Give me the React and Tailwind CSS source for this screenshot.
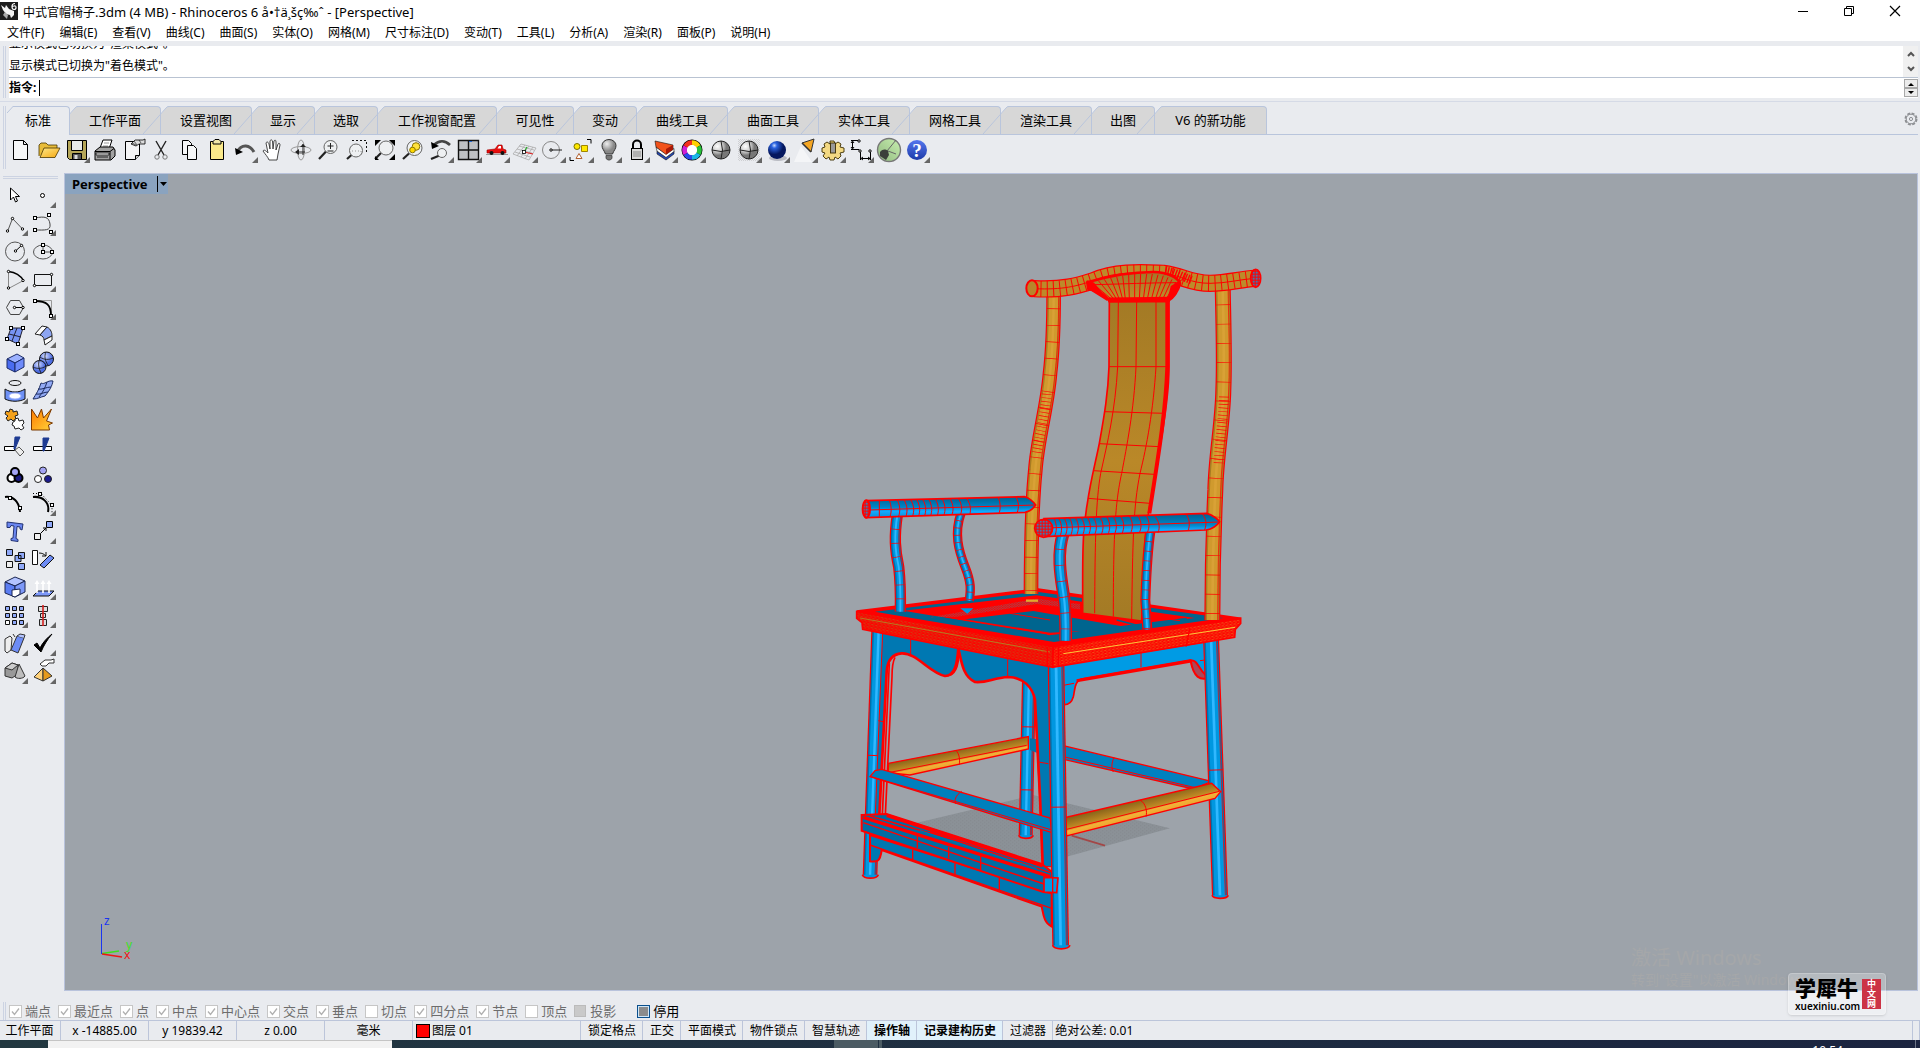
import { useState } from "react";

const menus = [
  "文件(F)", "编辑(E)", "查看(V)", "曲线(C)", "曲面(S)", "实体(O)", "网格(M)",
  "尺寸标注(D)", "变动(T)", "工具(L)", "分析(A)", "渲染(R)", "面板(P)", "说明(H)",
];

const tabs = [
  { label: "标准", width: "w-[63px]" },
  { label: "工作平面", width: "w-[91px]" },
  { label: "设置视图", width: "w-[91px]" },
  { label: "显示", width: "w-[63px]" },
  { label: "选取", width: "w-[63px]" },
  { label: "工作视窗配置", width: "w-[119px]" },
  { label: "可见性", width: "w-[77px]" },
  { label: "变动", width: "w-[63px]" },
  { label: "曲线工具", width: "w-[91px]" },
  { label: "曲面工具", width: "w-[91px]" },
  { label: "实体工具", width: "w-[91px]" },
  { label: "网格工具", width: "w-[91px]" },
  { label: "渲染工具", width: "w-[91px]" },
  { label: "出图", width: "w-[63px]" },
  { label: "V6 的新功能", width: "w-[112px]" },
];

const osnaps = [
  ["端点", true], ["最近点", true], ["点", true], ["中点", true], ["中心点", true],
  ["交点", true], ["垂点", true], ["切点", false], ["四分点", true], ["节点", true],
  ["顶点", false],
];

const toggles = [
  ["锁定格点", false], ["正交", false], ["平面模式", false], ["物件锁点", false],
  ["智慧轨迹", false], ["操作轴", true], ["记录建构历史", true], ["过滤器", false],
];

// small square control point
function Sq({ x, y }) {
  return <rect x={x - 1.5} y={y - 1.5} width="3" height="3" fill="#fff" stroke="#000" />;
}

// small round control point
function Dot({ x, y }) {
  return <circle cx={x} cy={y} r="1.2" fill="#fff" stroke="#000" />;
}

function Lens({ x, y, r = 6.5 }) {
  return (
    <g fill="none">
      <path d={`M${x - r + 2} ${y + r - 2}L4 23`} stroke="#222" strokeWidth="2.2" />
      <circle cx={x} cy={y} r={r} fill="#eef0f2" stroke="#666" />
    </g>
  );
}

const standardTools = [
  { name: "新建", el: <path d="M6.5 4.5h10l4 4v15h-14z M16.5 4.5v4h4" fill="#f6f7f8" stroke="#000" /> },
  {
    name: "打开",
    el: (
      <g stroke="#4a3600" strokeWidth="0.8">
        <path d="M4 20V9l2-2h5l2 2h9v3" fill="#e8bc3a" />
        <path d="M5 21.500L9 12h16l-5 9.500z" fill="url(#gold)" />
      </g>
    ),
  },
  {
    name: "保存", more: true,
    el: (
      <g stroke="#000">
        <path d="M4.500 4.500h19v19h-17l-2-2z" fill="#b5a658" />
        <path d="M8.500 4.500h11v10h-11z" fill="#e9ebe8" />
        <path d="M9.500 17.500h9v6h-9z" fill="#555" />
        <path d="M11.500 19h3v4h-3z" fill="#ddd" stroke="none" />
      </g>
    ),
  },
  {
    name: "打印",
    el: (
      <g stroke="#000">
        <path d="M9 12l3-8h9l-3 9" fill="#fff" />
        <path d="M13 7h5M12 10h5" stroke="#999" />
        <path d="M4 15l5-4h13l2 3v6l-4 4H4z" fill="#a2a2a2" />
        <path d="M4 15.500h15v8M19 15.500l4-3" fill="none" />
        <path d="M5 17h13v2H5zM6 21h11" fill="#fff" strokeWidth="0.8" />
      </g>
    ),
  },
  {
    name: "文件属性",
    el: (
      <g stroke="#000">
        <path d="M6.500 5.500h14v14l-4 4h-10z" fill="#f4f4f5" />
        <path d="M20.500 19.500h-4v4" fill="#ccc" />
        <path d="M12 8l4-4h8l2-1v5h-6l-3 2z" fill="#ddd" strokeWidth="0.8" />
        <path d="M13 7l4 2M15 5l3 4M20 4l2 3" strokeWidth="0.6" />
      </g>
    ),
  },
  {
    name: "剪切",
    el: (
      <g fill="none" stroke="#222">
        <path d="M9 5l8 14M19 5l-8 14" strokeWidth="1.4" />
        <circle cx="10" cy="21" r="2.200" stroke="#777" />
        <circle cx="18" cy="21" r="2.200" stroke="#777" />
      </g>
    ),
  },
  {
    name: "复制",
    el: (
      <g fill="#f6f7f8" stroke="#000">
        <path d="M7.500 4.500h6l3 3v11h-9z" />
        <path d="M12.500 9.500h6l3 3v11h-9z" />
      </g>
    ),
  },
  {
    name: "粘贴",
    el: (
      <g stroke="#000">
        <path d="M7.500 5.500h13v18h-13z" fill="#fae98a" />
        <path d="M10 5.500l2-2h4l2 2v2.500h-8z" fill="#f0e7a8" />
      </g>
    ),
  },
  {
    name: "撤销", more: true,
    el: (
      <g>
        <path d="M6 16C11 7 19 9 23 16" fill="none" stroke="#555" strokeWidth="3" />
        <path d="M4 12l1 7 7-3z" fill="#000" />
      </g>
    ),
  },
  {
    name: "平移",
    el: (
      <path
        d="M10 24c-1-3-4-6-6-9 1-2 3 0 5 2L7 7c1-2 2-1 3 1l1 5V5c1-2 2-1 2.500 0l.5 8 1-8c1-1.500 2-1 2 1v8l2-6c1-1.500 2-.5 2 1l-2 9-1 6z"
        fill="#fff" stroke="#333" strokeWidth="0.9"
      />
    ),
  },
  {
    name: "旋转视图",
    el: (
      <g fill="none" stroke="#999">
        <ellipse cx="14" cy="14" rx="10" ry="3.500" />
        <ellipse cx="14" cy="14" rx="3.500" ry="10" />
        <path d="M16 8v11M10 16h8" stroke="#222" />
        <path d="M13 11l3-3 3 3zM12 13l-4 3 4 3z" fill="#222" stroke="none" />
      </g>
    ),
  },
  {
    name: "缩放",
    el: (
      <g>
        <Lens x={15.500} y={11} />
        <path d="M12.500 10h6M15.500 7v6M12.500 15h6" stroke="#222" />
      </g>
    ),
  },
  {
    name: "框选缩放",
    el: (
      <g>
        <Lens x={13} y={14.500} />
        <path d="M9 4.500h14.500V18" fill="none" stroke="#111" strokeDasharray="2 2" />
        <path d="M9 15h9v4" fill="none" stroke="#999" strokeDasharray="1 2" />
      </g>
    ),
  },
  {
    name: "缩放至范围",
    el: (
      <g>
        <Lens x={15} y={12} r={7} />
        <path d="M4 4h6L4 10zM24 4v6l-6-6zM4 24v-4l4 4zM24 24h-6l6-6z" fill="#000" />
      </g>
    ),
  },
  {
    name: "缩放至选取",
    el: (
      <g>
        <Lens x={15.500} y={12} r={7.500} />
        <circle cx="17" cy="10.500" r="3.800" fill="#ffe23c" stroke="#8a7400" />
        <circle cx="13.500" cy="14" r="2.800" fill="#ffd900" stroke="#8a7400" />
      </g>
    ),
  },
  {
    name: "上一视图", more: true,
    el: (
      <g>
        <Lens x={15} y={17} r={4.500} />
        <path d="M7 9C12 4 18 4 23 9" fill="none" stroke="#444" strokeWidth="2.6" />
        <path d="M4 6l1 7 7-3z" fill="#000" />
      </g>
    ),
  },
  {
    name: "四视图", more: true,
    el: (
      <g>
        <path d="M3.500 4.500h20v19h-20z" fill="#bfc1c4" stroke="#111" strokeWidth="1.400" />
        <path d="M13.500 4.500v19M3.500 14h20" stroke="#111" strokeWidth="1.400" />
        <path d="M14 5.500h3" stroke="#26c" />
      </g>
    ),
  },
  {
    name: "汽车", more: true,
    el: (
      <g>
        <path d="M3 18.500h22" stroke="#999" />
        <path d="M4 17v-3l8-1 3-4h4l1 4 3 1v3z" fill="#e80d0d" stroke="#900" strokeWidth="0.6" />
        <path d="M14.500 12.500l1.500-2.500h2v2.500z" fill="#fff" />
        <circle cx="8.500" cy="17" r="2" fill="#111" />
        <circle cx="19.500" cy="17" r="2" fill="#111" />
      </g>
    ),
  },
  {
    name: "工作平面", more: true,
    el: (
      <g fill="none" stroke="#aaa" strokeWidth="0.800">
        <path d="M10 8l15 4-7 12L2 18zM6 13l15 4M4 16l15 5M8 10l15 4M14 9l-8 11M18 10l-8 11M22 11l-8 12" />
        <path d="M13 16l9 2" stroke="#d22" strokeWidth="1.200" />
        <path d="M13 16l3-5" stroke="#2a2" strokeWidth="1.200" />
        <Sq x={13} y={16} />
      </g>
    ),
  },
  {
    name: "设置中心", more: true,
    el: (
      <g fill="none" stroke="#888">
        <circle cx="12" cy="14" r="8.500" />
        <path d="M12 14h11" stroke="#222" />
        <Dot x={12} y={14} />
      </g>
    ),
  },
  {
    name: "选取", more: true,
    el: (
      <g stroke="#000">
        <circle cx="10" cy="10.500" r="3" fill="#ffe800" stroke="#777000" />
        <path d="M14.500 9.500h6v6h-6z" fill="#ffe800" stroke="#a08400" />
        <path d="M9 22.500l3-5 3 5z" fill="#fff" stroke="#b06030" />
        <path d="M20 3.500h4v4M3 21v3.500h4" fill="none" />
      </g>
    ),
  },
  {
    name: "隐藏", more: true,
    el: (
      <g>
        <path d="M10.500 18C9 14 7 13 7 9.500a7 6 0 0114 0c0 3.500-2 4.500-3.500 8.500z" fill="url(#bulb)" stroke="#333" />
        <path d="M11 19.500h6v3l-2 1.500h-2l-2-1.500z" fill="#777" stroke="#333" strokeWidth="0.7" />
      </g>
    ),
  },
  {
    name: "锁定", more: true,
    el: (
      <g>
        <path d="M10 13V8.500a4 4 0 018 0V13" fill="none" stroke="#000" strokeWidth="2" />
        <rect x="8.500" y="12.500" width="11" height="11" fill="#d8d8d8" stroke="#000" />
        <path d="M10 16h8M10 18h8M10 20h8" stroke="#888" />
      </g>
    ),
  },
  {
    name: "图层", more: true,
    el: (
      <g strokeLinejoin="round">
        <path d="M6 15l9 6 8-6v3l-8 6-9-6z" fill="#2347b4" stroke="#111" strokeWidth="0.600" />
        <path d="M5 11l10 6.500 8-5v3l-8 6L6 15z" fill="#fff" stroke="#111" strokeWidth="0.600" />
        <path d="M4 5l18 4v4.500l-7 5L5 11z" fill="#f2521b" stroke="#111" strokeWidth="0.600" />
        <path d="M15 13l7-4v4.500l-7 5z" fill="#a81808" />
      </g>
    ),
  },
  {
    name: "属性", more: true,
    el: (
      <g fill="none" strokeWidth="4.500">
        <circle cx="13" cy="14" r="7.500" stroke="#000" strokeWidth="6" />
        <circle cx="13" cy="14" r="5.500" fill="#fff" stroke="none" />
        <path d="M13 6.500a7.500 7.500 0 016.500 3.750" stroke="#ffd000" />
        <path d="M19.500 10.250a7.500 7.500 0 010 7.500" stroke="#28c23a" />
        <path d="M19.500 17.750a7.500 7.500 0 01-6.500 3.750" stroke="#19b7e6" />
        <path d="M13 21.500a7.500 7.500 0 01-6.500-3.750" stroke="#2a48ea" />
        <path d="M6.500 17.750a7.500 7.500 0 010-7.500" stroke="#d21fd6" />
        <path d="M6.500 10.250a7.500 7.500 0 016.500-3.750" stroke="#f4301c" />
      </g>
    ),
  },
  {
    name: "着色",
    el: (
      <g>
        <circle cx="14" cy="14" r="9" fill="url(#grayBall)" stroke="#222" />
        <path d="M14 5q3 9 0 18M5 14q9 3 18 0" stroke="#222" fill="none" />
      </g>
    ),
  },
  {
    name: "着色模式", more: true, pressed: true,
    el: (
      <g>
        <circle cx="14" cy="14" r="9" fill="url(#grayBall)" stroke="#222" />
        <path d="M14 5q3 9 0 18M5 14q9 3 18 0" stroke="#222" fill="none" />
      </g>
    ),
  },
  {
    name: "渲染", more: true,
    el: (
      <g>
        <ellipse cx="15" cy="22" rx="9" ry="3" fill="#b9bbc2" />
        <circle cx="14" cy="14" r="9" fill="url(#blueBall)" />
      </g>
    ),
  },
  {
    name: "灯光", more: true,
    el: (
      <g>
        <path d="M10 10L3 26h18z" fill="#fff" opacity="0.500" />
        <path d="M11 7l12-4-3 13z" fill="#f5a623" stroke="#333" />
        <path d="M11 7l9 9" stroke="#333" strokeWidth="1.600" />
      </g>
    ),
  },
  {
    name: "选项", more: true,
    el: (
      <g stroke="#3a2c00" strokeWidth="0.900">
        <path
          d="M11 5h4l1 3 3-2 3 2-1 3 4 1v4l-4 1 1 3-3 3-3-2-1 3h-4l-1-3-3 2-3-3 2-3-3-1v-4l3-1-1-3 3-2 3 2z"
          fill="#f3d983"
        />
        <rect x="11.500" y="7" width="5" height="10" fill="#999" />
      </g>
    ),
  },
  {
    name: "尺寸标注", more: true,
    el: (
      <g fill="none" stroke="#000">
        <path d="M4 4.500h7M4 13.500h8M5.500 6v6M13.500 16v8M23.500 16v8M15 22.500h8" />
        <path d="M4 7l1.500-2L7 7M4 11l1.500 2L7 11M16 21l-2 1.500 2 1.500M21 21l2 1.500-2 1.500" />
        <Dot x={12} y={5} />
        <Dot x={13} y={15} />
        <Dot x={23} y={15} />
      </g>
    ),
  },
  {
    name: "Grasshopper",
    el: (
      <g>
        <circle cx="14" cy="14" r="11.500" fill="url(#green)" stroke="#777" strokeWidth="1.400" />
        <path d="M12 15l9-11M13 15l8 3" stroke="#666" fill="none" />
        <path d="M5 16c3-3 5-3 8-1l1 4-3 5-6-4z" fill="#3b3f3a" />
      </g>
    ),
  },
  {
    name: "帮助", more: true,
    el: (
      <g>
        <circle cx="14" cy="14" r="10" fill="url(#helpBlue)" />
        <text x="14" y="21" textAnchor="middle" fontSize="19" fontWeight="700" fill="#fff" fontFamily="Liberation Serif, serif">?</text>
      </g>
    ),
  },
];

const sideTools = [
  { name: "选取", el: <path d="M9.500 7v12l3-3 2 5 2-1-2-4.500h4z" fill="#fff" stroke="#000" /> },
  { name: "点", more: true, el: <circle cx="13.500" cy="14.500" r="2" fill="#fff" stroke="#000" /> },
  {
    name: "多重直线", more: true,
    el: (
      <g fill="none" stroke="#555">
        <path d="M6.500 22.500l5-13 10 10.500" />
        <Dot x={6.500} y={22} /><Dot x={11.500} y={9.500} /><Dot x={21.500} y={20} />
      </g>
    ),
  },
  {
    name: "控制点曲线", more: true,
    el: (
      <g fill="none" stroke="#444">
        <path d="M6 9c10-2 14-1 15 6s-5 6-15 6" />
        <Sq x={6} y={9} /><Sq x={20} y={6} /><Sq x={6} y={21} /><Sq x={22} y={23} />
      </g>
    ),
  },
  {
    name: "圆", more: true,
    el: (
      <g fill="none" stroke="#555">
        <circle cx="14" cy="14.500" r="9.500" />
        <path d="M14 14.500l6.500-6" stroke="#000" />
        <Dot x={14.500} y={14} /><Dot x={20.500} y={8.500} />
      </g>
    ),
  },
  {
    name: "椭圆", more: true,
    el: (
      <g fill="none" stroke="#555">
        <ellipse cx="14" cy="15" rx="9.500" ry="7" />
        <path d="M14 8v7h9" />
        <Sq x={14} y={8} /><Sq x={14} y={15} /><Sq x={23} y={15} />
      </g>
    ),
  },
  {
    name: "圆弧", more: true,
    el: (
      <g fill="none" stroke="#888">
        <path d="M7.500 6.500v17l15-8" />
        <path d="M7.500 6.500c8 1 12 4 15 9" stroke="#000" strokeWidth="1.400" />
        <Dot x={7.500} y={6.500} /><Dot x={7.500} y={23} /><Dot x={22} y={15.500} />
      </g>
    ),
  },
  {
    name: "矩形", more: true,
    el: (
      <g fill="none" stroke="#111">
        <path d="M5.500 9.500h17v11h-17z" />
        <Dot x={22.500} y={9.500} /><Dot x={5.500} y={20.500} />
      </g>
    ),
  },
  {
    name: "多边形", more: true,
    el: (
      <g fill="none" stroke="#444">
        <path d="M9.500 7.500h9l4 7-4 7h-9l-4-7z" />
        <path d="M13.500 14.500h9" stroke="#000" />
        <Dot x={13.500} y={14.500} /><Dot x={22} y={14.500} />
      </g>
    ),
  },
  {
    name: "曲线圆角", more: true,
    el: (
      <g fill="none">
        <path d="M6 7.500h16.500V23" stroke="#999" />
        <path d="M6 8c12 0 16 4 16 15" stroke="#000" strokeWidth="1.800" />
        <Sq x={6} y={8} /><Sq x={22} y={23} />
      </g>
    ),
  },
  {
    name: "曲面", more: true,
    el: (
      <g>
        <path d="M10 7h12l-5 16L6 18z" fill="#7794f4" stroke="#223" />
        <path d="M16 7l-5 13M8 13l12 3" stroke="#223" />
        <Sq x={10} y={7} /><Sq x={22} y={7} /><Sq x={6} y={18} /><Sq x={17} y={23} />
      </g>
    ),
  },
  {
    name: "曲面圆角", more: true,
    el: (
      <g stroke="#222">
        <path d="M6 13l7-8 5 1-7 8z" fill="#fff" />
        <path d="M11 14l7-8c4 2 5 6 5 9l-8 4c0-2-1-4-4-5z" fill="#8da5f2" />
        <path d="M15 19l8-4v4l-7 5z" fill="#fff" />
      </g>
    ),
  },
  {
    name: "立方体", more: true,
    el: (
      <g stroke="#1a2a66">
        <path d="M6 10l10-5 7 4-9 5z" fill="#9db2ff" />
        <path d="M6 10l8 4v9l-8-4z" fill="#4a6cf0" />
        <path d="M14 14l9-5v9l-9 5z" fill="#6f8bfa" />
      </g>
    ),
  },
  {
    name: "布尔并集", more: true,
    el: (
      <g stroke="#111">
        <circle cx="17.500" cy="10" r="7" fill="url(#peri)" />
        <circle cx="10.500" cy="18" r="6.500" fill="url(#peri)" />
        <path d="M11 8c4 3 9 3 13 1M17 3c-2 4-1 9 2 13M4 18c4 2 9 2 13-1M10 12c-1 4 0 8 2 12" fill="none" strokeWidth="0.800" />
      </g>
    ),
  },
  {
    name: "投影曲线", more: true,
    el: (
      <g stroke="#111">
        <ellipse cx="14" cy="6" rx="6" ry="2.500" fill="none" />
        <path d="M4 12c6 4 14 4 20 0v10c-6 3-14 3-20 0z" fill="#6d90f5" />
        <ellipse cx="14" cy="19" rx="6" ry="3" fill="#fff" stroke="#9db2ff" />
      </g>
    ),
  },
  {
    name: "网格曲面", more: true,
    el: (
      <g stroke="#1d2c60" fill="#92aaf5">
        <path d="M12 6c4 2 6-3 12-2-1 5-3 9-8 15-5 1-7 3-12 3 3-5 6-9 8-16z" />
        <path d="M18 5c-2 6-4 10-8 15M9 12c4 1 8-2 13-2M7 17c4 1 8-2 12-2" fill="none" />
      </g>
    ),
  },
  {
    name: "组合",
    el: (
      <g stroke="#222">
        <path d="M5 6l3 1 1-3 3 1v2l4-1 1 4-3 1 1 3-3 2-2-2-3 2-2-3 2-2-3-2z" fill="#f5a21c" />
        <path d="M14 14l3-1 1 3 4-1 1 3-2 2 2 3-3 2-2-2-4 1-1-3-2-1 1-3 2-1z" fill="#fff" />
      </g>
    ),
  },
  {
    name: "炸开",
    el: <path d="M2.500 4l6 9 4-9 2 9 8-9-5 12 6 2-4 2 1 5H2.500z" fill="url(#fire)" stroke="#7a3800" />,
  },
  {
    name: "修剪",
    el: (
      <g stroke="#000">
        <path d="M3.500 13.500h10v4h-10z" fill="#fff" />
        <path d="M14 17l4-3 5 5-4 4z" fill="#eee" stroke="#555" />
        <path d="M14 4h5l-5 12h-1z" fill="#1e3b92" stroke="#1e3b92" />
      </g>
    ),
  },
  {
    name: "分割",
    el: (
      <g stroke="#000">
        <path d="M4.500 13.500h18v4h-18z" fill="#fff" />
        <path d="M14 5h6l-5 13h-1z" fill="#1e3b92" stroke="#1e3b92" />
      </g>
    ),
  },
  {
    name: "群组", more: true,
    el: (
      <g stroke="#000" strokeWidth="2">
        <circle cx="10.500" cy="17" r="4" fill="#fff" />
        <circle cx="17.500" cy="17" r="4" fill="#1a1a80" />
        <circle cx="14" cy="11" r="4" fill="#a3a3f5" />
      </g>
    ),
  },
  {
    name: "解散群组",
    el: (
      <g stroke="#222">
        <circle cx="14" cy="9.500" r="3.500" fill="#a3a3f5" />
        <circle cx="9" cy="18" r="3.500" fill="#fff" />
        <circle cx="19" cy="18" r="3.500" fill="#1a1a90" />
      </g>
    ),
  },
  {
    name: "点编辑",
    el: (
      <g fill="none">
        <path d="M4 8c8-1 14 4 15 15" stroke="#000" strokeWidth="2" />
        <Sq x={9} y={9} /><Sq x={19} y={19} />
      </g>
    ),
  },
  {
    name: "控制点", more: true,
    el: (
      <g fill="none">
        <path d="M4 8c9-1 17 5 15 15" stroke="#000" strokeWidth="2" />
        <path d="M4 4.500h8l11 12v8" stroke="#000" strokeDasharray="1 2" />
        <Sq x={11} y={5} /><Sq x={23} y={16} />
      </g>
    ),
  },
  {
    name: "文字",
    el: <path d="M6 5l16 2-1 6-2-1v-2l-3-.500-1 12 2 1v2l-7-1v-2l2-.500 1-12-3-.500-1 2H6z" fill="#6a86f0" stroke="#223272" />,
  },
  {
    name: "移动", more: true,
    el: (
      <g stroke="#000">
        <path d="M17.500 4.500h6v6h-6z" fill="#8fa8f8" />
        <path d="M5.500 16.500h6v6h-6z" fill="#eee" />
        <path d="M12 16l5-5M14 11h3v3" fill="none" />
      </g>
    ),
  },
  {
    name: "复制物件",
    el: (
      <g stroke="#111" fill="#8fa8f8">
        <path d="M5.500 4.500h6v6h-6zM17.500 7.500h6v6h-6zM14 10.500h6v6h-6zM17.500 18.500h6v6h-6z" />
        <path d="M5.500 16.500h6v6h-6z" fill="#eee" />
      </g>
    ),
  },
  {
    name: "旋转",
    el: (
      <g stroke="#111">
        <path d="M3.500 5.500h5v14h-5z" fill="#fff" />
        <path d="M10 8c3 0 5 1 7 3M17 7v4h-4" fill="none" />
        <path d="M11 20l10-10 4 3-10 10z" fill="#6d8cf5" />
      </g>
    ),
  },
  {
    name: "实体工具", more: true,
    el: (
      <g stroke="#1a2550">
        <path d="M4 9l10-5 10 4-10 5z" fill="#b3c3ff" />
        <path d="M4 9l10 4v11L4 20z" fill="#5b7df2" />
        <path d="M14 13l10-5v11l-10 5z" fill="#7d98f8" />
        <path d="M11 17l8-1v5l-5 3-3-1z" fill="#fff" />
      </g>
    ),
  },
  {
    name: "挤出", more: true,
    el: (
      <g>
        <path d="M4 23l5-5h16l-5 5z" fill="#7d98f8" stroke="#111" />
        <path d="M8 20V9M14 20V9M20 20V9" stroke="#fff" strokeWidth="1.600" />
        <path d="M5.500 11L8 7l2.500 4zM11.500 11L14 7l2.500 4zM17.500 11L20 7l2.500 4z" fill="#fff" />
      </g>
    ),
  },
  {
    name: "阵列", more: true,
    el: (
      <g stroke="#111" fill="#8fa8f8">
        <path d="M4.500 5.500h4v4h-4zM11.500 5.500h4v4h-4zM18.500 5.500h4v4h-4zM4.500 12.500h4v4h-4zM11.500 12.500h4v4h-4zM18.500 12.500h4v4h-4zM11.500 19.500h4v4h-4zM18.500 19.500h4v4h-4z" />
        <path d="M4.500 19.500h4v4h-4z" fill="#fff" />
      </g>
    ),
  },
  {
    name: "对齐", more: true,
    el: (
      <g stroke="#222" fill="#ddd">
        <path d="M9.500 5.500h9v5h-9zM11.500 12.500h5v4h-5zM10.500 18.500h7v6h-7z" />
        <path d="M14 4v21" stroke="#d42020" strokeWidth="1.600" />
      </g>
    ),
  },
  {
    name: "扭转", more: true,
    el: (
      <g stroke="#333">
        <path d="M4 10l5-3 2 2-1 12-4 3-2-2z" fill="#eee" />
        <path d="M12 5l2 3" />
        <path d="M16 7l7 2-6 15-7-3z" fill="#6d8cf5" />
        <path d="M16 7l3-2 5 1-1 3" fill="#b3c3ff" />
      </g>
    ),
  },
  { name: "检查", more: true, el: <path d="M5 16l3-2 3 5c3-6 7-10 12-14-5 6-8 11-11 18z" fill="#000" stroke="#000" /> },
  {
    name: "基本体", more: true,
    el: (
      <g stroke="#333">
        <path d="M4 11l7-5 6 2v9l-6 4-7-2z" fill="#999" />
        <path d="M4 11l7-5 6 2-6 5z" fill="#ccc" />
        <path d="M18 7l6 12c-2 3-8 3-10 1z" fill="#bdbdbd" />
      </g>
    ),
  },
  {
    name: "四棱锥", more: true,
    el: (
      <g stroke="#333">
        <path d="M14 11l-9 9 9 4z" fill="#ffd27a" />
        <path d="M14 11l9 8-9 5z" fill="#e59a1c" />
        <path d="M11 7l5-4h6l3-1v4h-5l-3 3h-4z" fill="#fff" />
      </g>
    ),
  },
];

function Tool({ tool }) {
  return (
    <button type="button" aria-label={tool.name} title={tool.name} className="h-7 w-7 shrink-0">
      <svg viewBox="0 0 28 28" className="h-7 w-7">
        {tool.pressed && <rect x="3" y="3" width="22" height="22" fill="url(#mesh)" />}
        {tool.el}
        {tool.more && <path d="M27 21v6h-6z" fill="#666" />}
      </svg>
    </button>
  );
}

function Defs() {
  return (
    <svg className="absolute h-0 w-0" aria-hidden="true">
      <defs>
        <linearGradient id="gold" x1="0" y1="0" x2="1" y2="1">
          <stop offset="0" stopColor="#ffe98a" /><stop offset="1" stopColor="#f5a70f" />
        </linearGradient>
        <linearGradient id="fire" x1="0" y1="0" x2="1" y2="1">
          <stop offset="0" stopColor="#ff7a00" /><stop offset="1" stopColor="#ffd43a" />
        </linearGradient>
        <radialGradient id="bulb" cx="0.350" cy="0.300">
          <stop offset="0" stopColor="#eee" /><stop offset="1" stopColor="#888" />
        </radialGradient>
        <radialGradient id="grayBall" cx="0.300" cy="0.300">
          <stop offset="0" stopColor="#fff" /><stop offset="0.600" stopColor="#ccc" /><stop offset="1" stopColor="#777" />
        </radialGradient>
        <radialGradient id="blueBall" cx="0.350" cy="0.250">
          <stop offset="0" stopColor="#c9dcff" /><stop offset="0.300" stopColor="#2a63e0" /><stop offset="1" stopColor="#04175e" />
        </radialGradient>
        <radialGradient id="peri" cx="0.400" cy="0.300">
          <stop offset="0" stopColor="#d5deff" /><stop offset="1" stopColor="#4d6ce0" />
        </radialGradient>
        <linearGradient id="green" x1="0" y1="1" x2="1" y2="0">
          <stop offset="0" stopColor="#8fb87e" /><stop offset="1" stopColor="#c8efb0" />
        </linearGradient>
        <linearGradient id="helpBlue" x1="0" y1="0" x2="0" y2="1">
          <stop offset="0" stopColor="#5577ee" /><stop offset="1" stopColor="#1c3aa8" />
        </linearGradient>
        <pattern id="mesh" width="2" height="2" patternUnits="userSpaceOnUse">
          <path d="M0 0h1v1H0zM1 1h1v1H1z" fill="#cfd0d3" />
        </pattern>
      </defs>
    </svg>
  );
}

const blue = ["#0072ac", "#0097e0", "#30b8ff"];
const orange = ["#a87c22", "#d09a2e", "#d9a136"];

// Round bar along a centre line: red silhouette, shaded body, isocurve rings
function Bar({ d, w, tone = blue, rings = "2 36" }) {
  return (
    <g fill="none">
      <path d={d} stroke="#f00" strokeWidth={w} />
      <path d={d} stroke={tone[0]} strokeWidth={w - 7} />
      <path d={d} stroke={tone[1]} strokeWidth={w - 16} />
      <path d={d} stroke={tone[2]} strokeWidth={w / 6} />
      {rings && <path d={d} stroke="#f00" strokeWidth={w - 4} strokeDasharray={rings} />}
      <path d={d} stroke="#f00" strokeWidth="2" transform={`translate(${Math.round(w / 3)} 0)`} />
    </g>
  );
}

const railLine = "M552 116C640 120 680 108 730 92C800 62 880 68 940 70C1000 78 1020 100 1080 100C1130 100 1170 88 1215 85";

function Chair() {
  return (
    <svg viewBox="0 0 1290 2130" className="absolute top-[76px] left-[785px] h-[710px] w-[430px]" role="img" aria-label="中式官帽椅子">
      <defs>
        <linearGradient id="armBlue" x1="0" y1="0" x2="0" y2="1">
          <stop offset="0" stopColor="#00608f" /><stop offset="0.500" stopColor="#0085c8" />
          <stop offset="0.700" stopColor="#12aaff" /><stop offset="1" stopColor="#0c8fd8" />
        </linearGradient>
        <linearGradient id="barGoldL" gradientUnits="userSpaceOnUse" x1="320" y1="1500" x2="329" y2="1545">
          <stop offset="0" stopColor="#8a651a" /><stop offset="0.600" stopColor="#c48c26" />
          <stop offset="0.700" stopColor="#f4b038" /><stop offset="1" stopColor="#e5a32f" />
        </linearGradient>
        <linearGradient id="barGoldR" gradientUnits="userSpaceOnUse" x1="870" y1="1650" x2="884" y2="1705">
          <stop offset="0" stopColor="#8a651a" /><stop offset="0.550" stopColor="#c48c26" />
          <stop offset="0.650" stopColor="#f4b038" /><stop offset="1" stopColor="#e5a32f" />
        </linearGradient>
        <linearGradient id="splat" x1="0" y1="0" x2="0" y2="1">
          <stop offset="0" stopColor="#a37a25" /><stop offset="0.500" stopColor="#ba8828" /><stop offset="1" stopColor="#a37a25" />
        </linearGradient>
        <linearGradient id="crest" x1="0" y1="0" x2="0" y2="1">
          <stop offset="0" stopColor="#a1762a" /><stop offset="1" stopColor="#c38d29" />
        </linearGradient>
        <pattern id="rimL" width="12" height="9" patternUnits="userSpaceOnUse" patternTransform="rotate(11)">
          <rect width="12" height="9" fill="#f00" /><path d="M1 2h6M7 6h4" stroke="#b8601c" strokeWidth="2.500" />
        </pattern>
        <pattern id="rimR" width="12" height="9" patternUnits="userSpaceOnUse" patternTransform="rotate(-9)">
          <rect width="12" height="9" fill="#f00" /><path d="M1 2h6M7 6h4" stroke="#e87a20" strokeWidth="2.500" />
        </pattern>
        <pattern id="weave" width="8" height="6" patternUnits="userSpaceOnUse">
          <rect width="8" height="6" fill="#f00" /><path d="M0 1h4M4 4h4" stroke="#68707e" strokeWidth="2" />
        </pattern>
        <pattern id="dots" width="9" height="9" patternUnits="userSpaceOnUse">
          <rect width="9" height="9" fill="#f00" /><path d="M2 2h6v6H2z" fill="#3f78ae" />
        </pattern>
        <pattern id="floor" width="12" height="10" patternUnits="userSpaceOnUse">
          <rect width="12" height="10" fill="#8b9197" /><path d="M0 2h4M6 7h4" stroke="#7f858b" strokeWidth="2" />
        </pattern>
      </defs>

      <path d="M195 1720L550 1635L960 1735L650 1820L570 1842Z" fill="url(#floor)" />
      <path d="M665 1757L765 1787" stroke="#a34747" strokeWidth="5" />

      {/* back legs and rear stretchers */}
      <Bar d="M538 1240L527 1758" w={42} rings="3 186" />
      <path d="M506 1756C510 1768 545 1768 550 1756" fill="#0097e0" stroke="#f00" strokeWidth="5" />
      <path d="M540 1465L560 1468V1508L540 1500Z" fill="#0072ac" />
      <path d="M640 1487L1085 1594L1030 1617L640 1528Z" fill="#0081c0" stroke="#f00" strokeWidth="4" />
      <path d="M640 1520L1040 1614M792 1523C784 1540 784 1555 790 1566" stroke="#f00" strokeWidth="3" fill="none" />
      <path d="M115 1540L535 1460L535 1497L180 1575L115 1568Z" fill="url(#barGoldL)" stroke="#f00" strokeWidth="4" />
      <path d="M115 1568L530 1486M318 1502C328 1510 330 1530 328 1544" stroke="#f00" strokeWidth="3" fill="none" />

      {/* right apron */}
      <path
        d="M635 1245L1085 1172L1083 1280C1050 1290 1030 1275 1022 1230L700 1286C672 1290 675 1320 670 1340C665 1358 655 1365 640 1364Z"
        fill="#009be4" stroke="#f00" strokeWidth="5"
      />
      <path d="M873 1200V1252M640 1306L672 1300M1050 1232L1082 1228" stroke="#f00" strokeWidth="3" />
      <path d="M680 1292L1020 1234" stroke="#f00" strokeWidth="9" />
      <path d="M1022 1232C1045 1225 1050 1275 1080 1282C1050 1295 1030 1280 1022 1232Z" fill="#a8485a" stroke="#f00" strokeWidth="6" />
      <Bar d="M1083 1160L1110 1938" w={48} rings="3 396" />
      <path d="M1086 1936C1090 1948 1130 1948 1135 1936" fill="#0097e0" stroke="#f00" strokeWidth="5" />
      <path d="M640 1704L1085 1600L1112 1625L1095 1645L650 1758Z" fill="url(#barGoldR)" stroke="#f00" strokeWidth="4" />
      <path d="M650 1738L1108 1624M870 1650C888 1660 892 1685 888 1700" stroke="#f00" strokeWidth="3" fill="none" />

      {/* left apron with its scalloped edge */}
      <Bar d="M86 1140L60 1878" w={44} rings="3 372" />
      <path d="M37 1874C42 1888 80 1888 85 1874" fill="#0097e0" stroke="#f00" strokeWidth="5" />
      <path
        d="M98 1145L600 1245L610 1850L578 1850L555 1350C548 1312 520 1282 475 1281C430 1283 410 1300 375 1296C340 1280 335 1240 325 1195C322 1240 315 1277 285 1278C240 1270 200 1208 155 1210C125 1212 112 1235 110 1265L88 1695L76 1695Z"
        fill="#0078b2" stroke="#f00" strokeWidth="3"
      />
      <path
        d="M578 1845L570 1640L555 1350C548 1312 520 1282 475 1281C430 1283 410 1300 375 1296C340 1280 335 1240 325 1195C322 1240 315 1277 285 1278C240 1270 200 1208 155 1210C125 1212 112 1235 110 1265L88 1695"
        fill="none" stroke="#f00" strokeWidth="8"
      />
      <path d="M135 1222C128 1235 126 1260 126 1280L106 1695M118 1240L97 1695M325 1195C330 1240 318 1268 300 1276" fill="none" stroke="#f00" strokeWidth="5" />
      <path d="M182 1165V1214M473 1220V1280M565 1536L595 1541M85 1412L104 1416" stroke="#f00" strokeWidth="3" />
      <path d="M95 1558L600 1704L606 1748L60 1580L75 1562Z" fill="#0080bd" stroke="#f00" strokeWidth="4" />
      <path d="M64 1580L606 1740M335 1624C316 1636 312 1652 318 1662" stroke="#f00" strokeWidth="3" fill="none" />

      {/* foot rest */}
      <path d="M60 1755L605 1930L605 2030C580 2018 580 1990 575 1970L95 1800C90 1838 80 1836 60 1834Z" fill="#0078b2" stroke="#f00" strokeWidth="6" />
      <path d="M60 1785L605 1975M188 1800V1830M315 1840V1876M448 1880V1920" stroke="#f00" strokeWidth="4" />
      <path d="M35 1695L110 1692L575 1842L627 1882L620 1930L580 1926L35 1742Z" fill="#006ca3" stroke="#f00" strokeWidth="6" />
      <path d="M40 1702L600 1880M110 1696L578 1848" stroke="#f00" strokeWidth="10" />
      <path d="M40 1718L582 1902M60 1698L330 1775M240 1745L600 1868M202 1758V1794M296 1790V1825M392 1818V1860" stroke="#f00" strokeWidth="4" />
      <path d="M210 1742L330 1782L560 1856" stroke="#0072a8" strokeWidth="4" fill="none" />

      <Bar d="M618 1235L632 2088" w={50} rings="3 432" />
      <path d="M608 2086C612 2100 655 2100 660 2086" fill="#0097e0" stroke="#f00" strokeWidth="5" />
      <path d="M582 1882L624 1884L620 1928L582 1926Z" fill="#009be4" stroke="#f00" strokeWidth="5" />
      <path d="M608 1884V1928" stroke="#f00" strokeWidth="4" />

      {/* seat */}
      <path d="M20 1085L610 1185L608 1252L38 1138L36 1118L20 1105Z" fill="url(#rimL)" stroke="#f00" strokeWidth="5" />
      <path d="M610 1185L1172 1105L1172 1120L1156 1138L1154 1162L608 1252Z" fill="url(#rimR)" stroke="#f00" strokeWidth="5" />
      <path d="M30 1104L600 1206" stroke="#b77a22" strokeWidth="3" />
      <path d="M640 1211L1155 1132" stroke="#ffc53a" strokeWidth="3" />
      <path d="M592 1190V1248M625 1190V1246M1020 1134L1008 1190" stroke="#f00" strokeWidth="4" />
      <path d="M20 1083L565 1017L1172 1105L610 1190Z" fill="#f00" stroke="#f00" strokeWidth="5" />
      <path d="M75 1085L560 1025L1120 1104L612 1176Z M160 1082L598 1156L1035 1104L560 1036Z" fill="#00658f" fillRule="evenodd" />
      <path d="M240 1102L560 1046L690 1062L690 1078L560 1062L320 1100Z" fill="url(#weave)" />
      <path d="M345 1108L550 1083L850 1135L600 1148Z" fill="#00658f" />
      <path d="M250 1100L590 1156M640 1152L1010 1106M800 1110L870 1128" stroke="#00658f" strokeWidth="5" />
      <path d="M480 1090L600 1110M900 1100L990 1112" stroke="#f00" strokeWidth="3" />

      {/* back posts */}
      <Bar d="M611 125C611 240 606 320 600 370C592 470 562 570 556 660C548 740 543 880 543 1032" w={44} tone={orange} rings="2 48" />
      <path d="M590 432C585 500 565 570 560 610" fill="none" stroke="#f00" strokeWidth="30" strokeDasharray="2 9" />
      <path d="M528 1052H564" stroke="#e3a82e" strokeWidth="7" />

      {/* splat */}
      <path
        d="M778 155L777 350C774 430 764 490 748 580C736 640 722 690 712 760C700 830 698 880 698 1000V1090L875 1113L885 870C892 790 912 700 930 590C944 510 957 430 957 350V155Z"
        fill="url(#splat)" stroke="#f00" strokeWidth="5"
      />
      <path d="M952 150V350C948 470 930 590 898 790" fill="none" stroke="#f00" strokeWidth="12" />
      <path
        d="M805 155L803 350C796 480 772 580 752 670C738 750 735 860 734 1090M860 155L858 350C852 480 830 590 815 670C795 760 790 860 790 1100M918 155V350C910 480 890 590 870 670C850 770 848 870 845 1110M777 350H950M765 485L945 490M748 581L928 590M730 662L912 673M714 745L900 760"
        fill="none" stroke="#f00" strokeWidth="3"
      />

      <Bar d="M1118 105C1120 220 1124 320 1120 420C1118 520 1098 620 1096 720C1090 850 1087 980 1087 1110" w={48} tone={orange} rings="2 56" />
      <path d="M1122 440C1120 510 1108 580 1106 640" fill="none" stroke="#f00" strokeWidth="30" strokeDasharray="2 9" />

      {/* crest rail */}
      <g fill="none">
        <path d={railLine} stroke="#f00" strokeWidth="52" />
        <path d={railLine} stroke="#bd8a2a" strokeWidth="45" />
        <path d={railLine} stroke="#f00" strokeWidth="48" strokeDasharray="3 16" />
        <path d={railLine} stroke="#f00" strokeWidth="3" />
      </g>
      <ellipse cx="546" cy="115" rx="17" ry="24" fill="#b8852a" stroke="#f00" strokeWidth="6" />
      <ellipse cx="1217" cy="85" rx="15" ry="27" fill="url(#dots)" stroke="#f00" strokeWidth="5" />
      <path
        d="M712 97C770 80 840 66 910 66C955 66 985 85 990 100C985 125 968 145 955 152H778C768 140 760 128 715 116Z"
        fill="url(#crest)" stroke="#f00" strokeWidth="8"
      />
      <path
        d="M725 98L785 148M745 92L792 148M763 88L800 148M782 84L808 148M800 80L818 148M818 77L826 148M836 74L838 148M854 72V148M872 72L868 148M890 72L880 148M907 72L892 148M924 74L904 148M940 77L916 148M954 82L926 148M966 88L938 148M978 96L948 148M735 104C820 102 900 98 980 98"
        stroke="#f00" strokeWidth="3" fill="none"
      />
      <path d="M775 150L960 148" stroke="#f00" strokeWidth="15" />
      <path d="M714 95L718 116L772 150L730 100ZM988 96L975 130L955 148L965 110Z" fill="#f00" stroke="#f00" strokeWidth="6" />
      <path d="M945 62C975 66 1000 82 1025 90" stroke="#f00" strokeWidth="26" strokeDasharray="4 4" fill="none" />

      {/* left arm */}
      <Bar d="M142 795C132 860 135 900 146 950C152 1000 152 1030 151 1085" w={34} rings="2 40" />
      <Bar d="M333 790C312 850 325 900 345 950C365 1000 362 1020 358 1052" w={28} rings="2 20" />
      <path d="M340 1078H362L352 1087Z" fill="#0097e0" stroke="#0097e0" strokeWidth="6" />
      <path d="M48 752L525 740C540 745 552 758 557 765C550 775 540 785 525 787L48 803Z" fill="url(#armBlue)" stroke="#f00" strokeWidth="5" />
      <path
        d="M55 780L555 765M88 752V800M118 750C125 770 125 785 120 800M142 750C152 770 150 785 146 800M162 749C174 770 172 785 168 800M182 749C194 770 192 785 188 798M200 748C212 770 210 785 206 798M218 748C230 768 228 785 224 797M236 747C248 768 246 785 242 797M256 747C268 768 266 785 262 796M276 746C288 768 286 782 282 795M300 746C312 766 310 782 306 794M325 745C338 766 336 780 332 793M350 745C364 766 362 780 360 792M445 742C452 760 452 775 448 788M498 741C507 758 507 772 502 786"
        fill="none" stroke="#f00" strokeWidth="3"
      />
      <ellipse cx="49" cy="777" rx="11" ry="26" fill="url(#dots)" stroke="#f00" strokeWidth="6" />

      {/* right arm */}
      <Bar d="M901 845C890 920 888 1000 886 1050L892 1138" w={30} rings="2 27" />
      <Bar d="M640 850C620 910 632 980 640 1030C648 1080 648 1120 647 1172" w={38} rings="2 46" />
      <path d="M582 806L1070 790C1088 795 1104 808 1109 815C1100 828 1090 836 1068 840L582 860Z" fill="url(#armBlue)" stroke="#f00" strokeWidth="5" />
      <path
        d="M582 834L1108 816M612 805C622 825 620 845 614 858M626 805C638 825 636 845 630 858M642 804C655 825 652 842 646 857M658 804C671 824 668 842 662 857M676 803C689 824 686 840 680 856M694 803C707 824 704 840 698 856M712 802C725 824 722 840 716 855M730 802C743 822 740 840 734 854M750 801C763 822 760 838 754 854M770 800C783 820 780 838 774 853M790 800C803 820 800 836 794 852M812 799C825 820 822 836 816 851M838 798C851 818 848 834 842 850M864 797C877 818 874 834 868 849M888 796C901 816 898 832 892 848M912 796C930 816 930 832 924 848M1008 792C1020 810 1020 826 1014 842M1056 790C1070 808 1070 822 1064 840"
        fill="none" stroke="#f00" strokeWidth="3"
      />
      <circle cx="581" cy="835" r="27" fill="url(#dots)" stroke="#f00" strokeWidth="5" />
    </svg>
  );
}

function TitleBar() {
  return (
    <header className="flex h-[22px] items-center bg-white text-xs leading-4">
      <svg viewBox="0 0 18 18" className="mr-[5px] h-[18px] w-[18px]" aria-hidden="true">
        <rect width="18" height="18" fill="#1c1c1c" />
        <path d="M1 3l4 3 1-3 3 4 5 2v4l-3 3-1-3-4-1-3-4z" fill="#f4f4f4" />
        <path d="M5 10l3 3-1 4-4-4z" fill="#aaa" />
        <path d="M15 1.500q-3 0-3 3t2 3 2-2-2-1.500-2 1" fill="none" stroke="#fff" strokeWidth="1.200" />
      </svg>
      <h1 className="flex-1 whitespace-pre pt-[2px]">
        中式官帽椅子<span className="text-[13px]">.3dm (4 MB) - Rhinoceros 6 å•†ä¸šç‰ˆ - [Perspective]</span>
      </h1>
      <div className="flex pr-[2px]">
        <button type="button" aria-label="最小化" className="flex w-[46px] justify-center">
          <svg viewBox="0 0 12 12" className="h-3 w-3"><path d="M1 6.500h10" stroke="#000" /></svg>
        </button>
        <button type="button" aria-label="还原" className="flex w-[46px] justify-center">
          <svg viewBox="0 0 12 12" className="h-3 w-3" fill="none" stroke="#000"><path d="M1.500 3.500h7v7h-7zM3.500 3.500v-2h7v7h-2" /></svg>
        </button>
        <button type="button" aria-label="关闭" className="flex w-[46px] justify-center">
          <svg viewBox="0 0 12 12" className="h-3 w-3"><path d="M1 1l10 10M11 1L1 11" stroke="#000" strokeWidth="1.200" /></svg>
        </button>
      </div>
    </header>
  );
}

function CommandArea() {
  const [command, setCommand] = useState("");
  return (
    <section className="flex border-b border-[#d5dae6] pt-[5px] pb-[3px] pr-[2px]">
      <div className="mx-[3px] w-[3px] border-x border-[#ccd3e2]" />
      <div className="min-w-0 flex-1 bg-white text-xs">
        <div className="flex h-8 border-b border-[#b9c3d2]">
          <div className="flex flex-1 flex-col justify-end overflow-hidden">
            <p className="h-[22px] shrink-0 leading-[22px]">显示模式已切换为"渲染模式"。</p>
            <p className="h-[22px] shrink-0 leading-[22px]">显示模式已切换为"着色模式"。</p>
          </div>
          <div className="flex w-[15px] flex-col justify-around bg-[#f0f0f0]">
            <button type="button" aria-label="向上滚动" className="flex justify-center">
              <svg viewBox="0 0 8 8" className="h-2 w-2"><path d="M1 6l3-3 3 3" fill="none" stroke="#555" strokeWidth="2" /></svg>
            </button>
            <button type="button" aria-label="向下滚动" className="flex justify-center">
              <svg viewBox="0 0 8 8" className="h-2 w-2"><path d="M1 2l3 3 3-3" fill="none" stroke="#555" strokeWidth="2" /></svg>
            </button>
          </div>
        </div>
        <div className="flex h-5 items-center leading-4">
          <label htmlFor="command" className="font-bold">指令:</label>
          <span className="ml-[3px] h-4 w-px bg-black" />
          <input
            id="command"
            value={command}
            onChange={(e) => setCommand(e.target.value)}
            className="h-5 flex-1 bg-white outline-none"
          />
          <div className="flex flex-col">
            <button type="button" aria-label="上一个指令" className="flex h-[9px] w-[14px] items-center justify-center border border-[#a8a8a8] bg-[#ececec]">
              <svg viewBox="0 0 6 4" className="h-1 w-1.5"><path d="M0 4l3-3 3 3z" /></svg>
            </button>
            <button type="button" aria-label="下一个指令" className="flex h-[9px] w-[14px] items-center justify-center border border-[#a8a8a8] bg-[#ececec]">
              <svg viewBox="0 0 6 4" className="h-1 w-1.5"><path d="M0 0l3 3 3-3z" /></svg>
            </button>
          </div>
        </div>
      </div>
    </section>
  );
}

function Tab({ tab, first, active, onSelect }) {
  return (
    <button
      type="button"
      role="tab"
      aria-selected={active}
      onClick={onSelect}
      className={
        active
          ? `relative z-10 h-[29px] rounded-tr border-t border-r border-[#b9c5dc] bg-[#e9ebef] pb-[3px] ${tab.width}`
          : `relative h-7 rounded-tr border-t border-r border-[#b9c5dc] bg-[#d7d7d7] pb-[2px] ${tab.width}`
      }
    >
      {first ? (
        <svg viewBox="0 0 8 28" className="absolute -top-px left-0 h-7 w-2" aria-hidden="true">
          <path d="M0 0h6L0 8z" fill="#e9ebef" />
          <path d="M0 7L6 .500h2" fill="none" stroke="#b9c5dc" />
        </svg>
      ) : (
        <svg viewBox="0 0 26 28" className="absolute -top-px -left-[18px] h-7 w-[26px]" aria-hidden="true">
          <path d="M18 0h7L18 8z" fill="#e9ebef" />
          <path d="M0 28L23 2Q24 .500 26 .500" fill="none" stroke="#b9c5dc" />
        </svg>
      )}
      <span className="relative">{tab.label}</span>
    </button>
  );
}

function Toolbars() {
  const [current, setCurrent] = useState(0);
  return (
    <section className="flex h-[71px] pt-1 pr-[2px]">
      <div className="mr-px mb-1 ml-[3px] w-[3px] border-x border-[#ccd3e2]" />
      <div className="min-w-0 flex-1">
        <div className="flex h-[29px] items-start border-b border-[#b9c5dc]">
          <div role="tablist" className="flex text-[13px] leading-5">
            {tabs.map((tab, i) => (
              <Tab key={i} tab={tab} first={i === 0} active={current === i} onSelect={() => setCurrent(i)} />
            ))}
          </div>
          <button type="button" aria-label="工具列选项" className="mt-[6px] ml-auto">
            <svg viewBox="0 0 14 14" className="h-3.5 w-3.5" fill="none" stroke="#8d8f93">
              <circle cx="7" cy="7" r="5.700" strokeWidth="1.600" strokeDasharray="3 1.470" />
              <circle cx="7" cy="7" r="4.800" />
              <circle cx="7" cy="7" r="1.600" />
            </svg>
          </button>
        </div>
        <div role="toolbar" className="flex pt-px">
          {standardTools.map((tool) => <Tool key={tool.name} tool={tool} />)}
        </div>
      </div>
    </section>
  );
}

function AxisIcon() {
  return (
    <svg viewBox="0 0 40 50" className="absolute bottom-[25px] left-[31px] h-[50px] w-10" fontFamily="Noto Sans, sans-serif" fontSize="12" fill="none" aria-label="坐标轴">
      <path d="M5.500 9v30" stroke="#1a35f0" />
      <path d="M6 38.500l17-2.500" stroke="#3be01c" strokeWidth="1.400" />
      <path d="M6 39l20 3" stroke="#f01414" strokeWidth="1.400" />
      <text x="8" y="10" fill="#1a35f0">z</text>
      <text x="30" y="34" fill="#3be01c">y</text>
      <text x="28" y="44" fill="#f01414">x</text>
    </svg>
  );
}

function Viewport() {
  return (
    <main className="relative mr-px flex-1 overflow-hidden border border-[#b9c3dc] bg-[#9da3aa]">
      <div className="flex h-5 w-[103px] items-center bg-[#8aa3bf] pl-[7px]">
        <h2 className="text-[13px] leading-5 font-bold">Perspective</h2>
        <button type="button" aria-label="视图选单" className="ml-auto flex h-4 w-[11px] items-center border-l border-black pl-[2px]">
          <svg viewBox="0 0 7 4" className="h-1 w-[7px]"><path d="M0 0h7L3.500 4z" /></svg>
        </button>
      </div>
      <Chair />
      <AxisIcon />
      <div className="absolute right-[130px] bottom-0 w-[156px] whitespace-nowrap text-[#a5a7a9]">
        <p className="text-xl leading-6">激活 Windows</p>
        <p className="text-sm leading-5">转到"设置"以激活 Windows。</p>
      </div>
    </main>
  );
}

function SnapBox({ label, checked }) {
  return (
    <label className="relative flex items-center gap-[3px]">
      <input type="checkbox" defaultChecked={checked} disabled className="h-[13px] w-[13px] appearance-none border border-[#c6c6c6] bg-white" />
      {checked && (
        <svg viewBox="0 0 13 13" className="absolute left-0 h-[13px] w-[13px]" aria-hidden="true">
          <path d="M3 6.500l2.500 3L10 3.500" fill="none" stroke="#b0b0b0" strokeWidth="1.300" />
        </svg>
      )}
      {label}
    </label>
  );
}

function SnapBar() {
  return (
    <section className="flex h-[30px] items-center border-b border-[#bcc5da] pt-[11px] text-[13px] leading-[18px] text-[#6d6d6d]">
      <div className="ml-[3px] h-[18px] w-[3px] border-x border-[#ccd3e2]" />
      <div className="ml-[3px] flex gap-[7px]">
        {osnaps.map(([label, checked]) => <SnapBox key={label} label={label} checked={checked} />)}
        <label className="flex items-center gap-1">
          <input type="checkbox" disabled className="h-3 w-3 appearance-none border border-[#bbb] bg-[#c9c9c9]" />
          投影
        </label>
        <label className="ml-[14px] flex items-center gap-[3px] text-black">
          <input type="checkbox" className="h-[13px] w-[13px] appearance-none border border-[#0a4f8c] bg-[#8b8b8b] outline-1 -outline-offset-2 outline-[#cfe6f7]" />
          停用
        </label>
      </div>
    </section>
  );
}

function StatusBar() {
  return (
    <footer className="flex h-[19px] text-xs leading-[19px] *:border-r *:border-[#bcc5da]">
      <button type="button" className="w-[61px] pr-px">工作平面</button>
      <span className="w-[88px] text-center">x -14885.00</span>
      <span className="w-[88px] text-center">y 19839.42</span>
      <span className="w-[88px] text-center">z 0.00</span>
      <button type="button" className="w-[88px]">毫米</button>
      <button type="button" className="flex w-[168px] items-center gap-[2px] pl-[3px]">
        <span className="h-[14px] w-[14px] border border-black bg-[#f00]" />
        图层 01
      </button>
      {toggles.map(([label, on]) => (
        <button key={label} type="button" aria-pressed={on} className={on ? "bg-[#e1f1fb] pr-[6px] pl-[7px] font-bold" : "pr-[6px] pl-[7px]"}>
          {label}
        </button>
      ))}
      <span className="flex-1 pl-[2px]">绝对公差: 0.01</span>
      <span className="w-[7px] border-r-0" />
    </footer>
  );
}

function Taskbar() {
  return (
    <div className="flex h-2 overflow-hidden bg-linear-to-r from-[#223840] to-[#1b2440]">
      <div className="ml-12 w-[344px] border-t border-[#c4c4c4] bg-[#f2f2f2]" />
      <div className="ml-[442px] w-11 bg-[#4b5b63]" />
      <div className="ml-px w-[3px] bg-[#4b5b63]" />
      <time className="mr-[72px] ml-auto pt-[3px] text-xs leading-4 text-white">10:54</time>
      <div className="mr-1 w-px bg-[#6d7588]" />
    </div>
  );
}

function SiteBadge() {
  return (
    <aside className="absolute right-[34px] bottom-[33px] flex h-[42px] w-[98px] items-center gap-1 rounded-[4px] border border-white/20 bg-white/25 pl-[6px] shadow-sm">
      <div className="w-[63px] text-black">
        <p className="text-[21px] leading-6 font-black">学犀牛</p>
        <p className="text-[10px] leading-3 font-semibold">xuexiniu.com</p>
      </div>
      <p className="flex h-[30px] w-[19px] flex-col items-center bg-[#cc3345] text-[9px] leading-[10px] font-bold text-white">
        <span>中</span><span>文</span><span>网</span>
      </p>
    </aside>
  );
}

export default function App() {
  return (
    <div className="relative flex h-screen flex-col overflow-hidden bg-[#e9ebef] font-['Noto_Sans','Noto_Sans_CJK_SC',sans-serif] text-black">
      <Defs />
      <TitleBar />
      <nav className="flex h-[19px] gap-[15px] bg-white pt-px pl-[7px] text-xs leading-[19px] whitespace-nowrap">
        {menus.map((item) => <button key={item} type="button">{item}</button>)}
      </nav>
      <CommandArea />
      <Toolbars />
      <div className="flex min-h-0 flex-1 pr-px">
        <div className="w-16 shrink-0">
          <div className="mx-[3px] mt-[3px] h-[3px] w-[55px] border-y border-[#ccd3e2]" />
          <div role="toolbar" className="mt-[2px] ml-px grid w-14 grid-cols-2">
            {sideTools.map((tool) => <Tool key={tool.name} tool={tool} />)}
          </div>
        </div>
        <Viewport />
      </div>
      <SnapBar />
      <StatusBar />
      <Taskbar />
      <SiteBadge />
    </div>
  );
}
